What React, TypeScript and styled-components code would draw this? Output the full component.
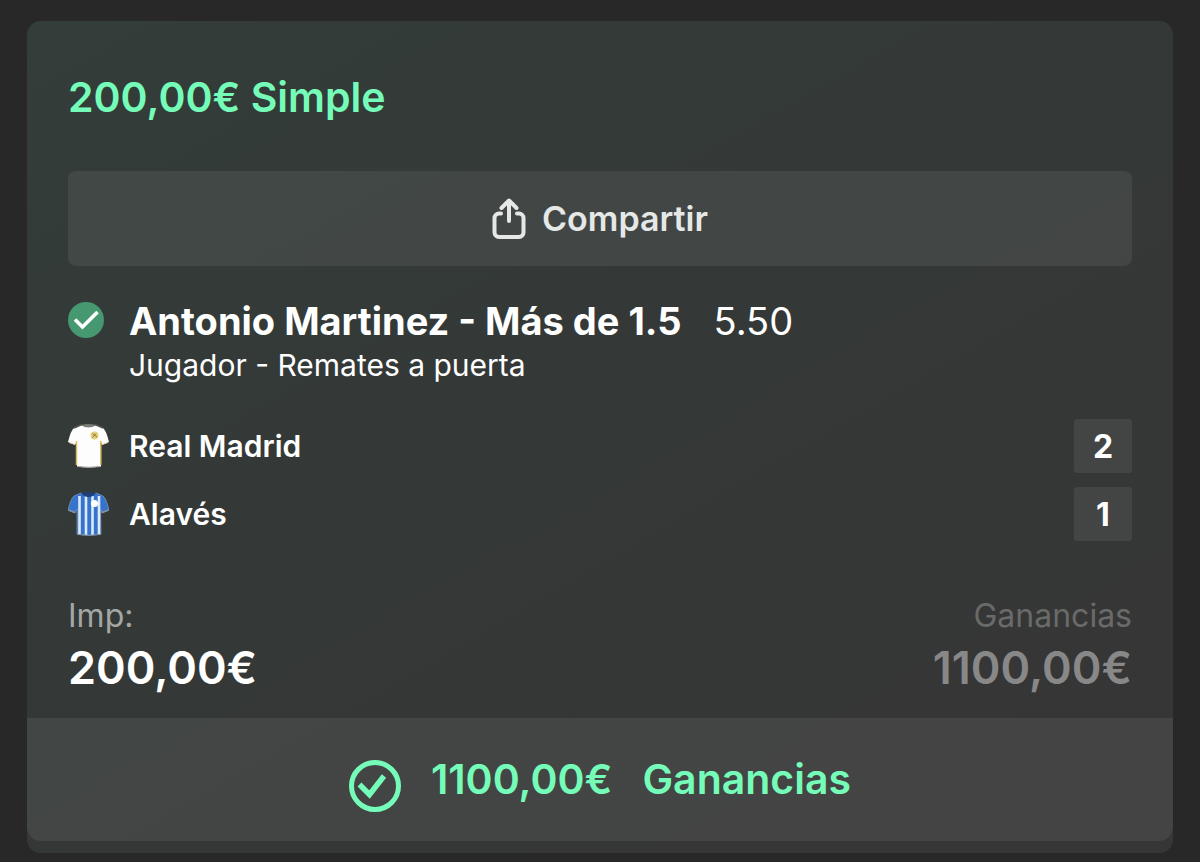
import React from "react";
import styled, { createGlobalStyle } from "styled-components";

const GlobalStyle = createGlobalStyle`
  *, *::before, *::after { box-sizing: border-box; }
  body {
    margin: 0;
    background: #282828;
    color: #fff;
    font-family: Inter, "Liberation Sans", sans-serif;
  }
  h1, h2, p, dl, dt, dd, ul { margin: 0; padding: 0; }
`;

const Page = styled.main`
  padding: 21px 27px 9px;
`;

const Card = styled.article`
  padding-bottom: 12px;
  border-radius: 14px;
  overflow: hidden;
  background: linear-gradient(150deg, #333d39 0%, #343837 50%, #363636 85%, #363636 100%);
`;

const CardBody = styled.div`
  display: flex;
  flex-direction: column;
  padding: 52px 41px 22px;
`;

const Title = styled.h1`
  font-size: 41px;
  line-height: 48px;
  font-weight: 600;
  color: #75fcb9;
`;

const ShareButton = styled.button`
  display: flex;
  align-items: center;
  justify-content: center;
  gap: 16px;
  height: 95px;
  margin-top: 50px;
  border: 0;
  border-radius: 8px;
  background: rgba(255, 255, 255, 0.07);
  color: #e6e8e7;
  font-family: inherit;
  font-size: 34px;
  line-height: 40px;
  font-weight: 600;
  cursor: pointer;
`;

const Selection = styled.section`
  display: grid;
  grid-template-columns: 36px 1fr;
  column-gap: 25px;
  margin-top: 31px;
`;

const StatusIcon = styled.svg`
  margin-top: 5px;
`;

const SelectionLine = styled.div`
  display: flex;
  gap: 32px;
  font-size: 38px;
  line-height: 48px;
`;

const SelectionName = styled.h2`
  font-size: inherit;
  font-weight: 700;
`;

const Odds = styled.span`
  font-weight: 400;
`;

const Market = styled.p`
  font-size: 30px;
  line-height: 40px;
`;

const Teams = styled.ul`
  display: flex;
  flex-direction: column;
  gap: 14px;
  margin-top: 34px;
  list-style: none;
`;

const TeamRow = styled.li`
  display: flex;
  align-items: center;
  height: 54px;
`;

const TeamName = styled.span`
  flex: 1;
  margin-left: 20px;
  font-size: 30px;
  font-weight: 600;
`;

const Score = styled.span`
  display: flex;
  align-items: center;
  justify-content: center;
  width: 58px;
  height: 100%;
  border-radius: 3px;
  background: rgba(255, 255, 255, 0.07);
  font-size: 32px;
  font-weight: 700;
`;

const Totals = styled.dl`
  display: flex;
  justify-content: space-between;
  margin-top: 55px;
`;

const Total = styled.div<{ $muted?: boolean }>`
  text-align: ${(p) => (p.$muted ? "right" : "left")};
  dt {
    font-size: 32px;
    line-height: 40px;
    font-weight: 400;
    color: ${(p) => (p.$muted ? "#696a69" : "#a4a7a6")};
  }
  dd {
    margin-top: 4px;
    font-size: 45px;
    line-height: 56px;
    font-weight: 600;
    color: ${(p) => (p.$muted ? "#888" : "#fff")};
  }
`;

const Result = styled.footer`
  display: flex;
  align-items: flex-start;
  justify-content: center;
  gap: 30px;
  padding: 42px 41px 29px;
  border-radius: 0 0 14px 14px;
  background: rgba(255, 255, 255, 0.07);
  color: #75fcb9;
  font-size: 41px;
  line-height: 38px;
  font-weight: 600;
`;

const ShareIcon = () => (
  <svg width="34" height="42" viewBox="0 0 34 42" fill="none" stroke="currentColor" strokeWidth="4" strokeLinecap="round" strokeLinejoin="round" aria-hidden="true">
    <path d="M9 15.500H7A4.500 4.500 0 0 0 2.500 20v14.500A4.500 4.500 0 0 0 7 39h20a4.500 4.500 0 0 0 4.500-4.500V20a4.500 4.500 0 0 0-4.500-4.500h-2" />
    <path d="M17 23V3M9.500 10L17 2.500L24.500 10" />
  </svg>
);

const WhiteShirt = () => (
  <svg width="41" height="46" viewBox="0 0 41 46" aria-hidden="true">
    <path d="M13 2Q20.500 6 28 2L35 5Q38 7 41 19L34 22L32.500 18L33 43Q20.500 46 9 43L9 18L7 22L0 19Q3 7 6 5Z" fill="#fdfdfd" />
    <path d="M13 2Q20.500 0 28 2Q20.500 7 13 2Z" fill="#777b79" />
    <path d="M14 1.500L6 5M27 1.500L35 5" stroke="#55564e" strokeWidth="1.500" />
    <path d="M8.500 18V42M32.800 18V42" stroke="#d6bd63" strokeWidth="1.500" />
    <path d="M1 19.500L7 21.500M34 21.500L40 19.500" stroke="#dfcf9d" />
    <path d="M9 43.500Q20.500 45 33 43.500" stroke="#aaa" fill="none" />
    <circle cx="26.500" cy="12.500" r="4" fill="#e5d17c" />
    <path d="M24.500 14.500L28 10.500M24.500 10.500L29 14" stroke="#8c7838" />
  </svg>
);

const StripedShirt = () => (
  <svg width="41" height="46" viewBox="0 0 41 46" aria-hidden="true">
    <path d="M13 2Q20.500 6 28 2L35 5Q38 7 41 19L34 22L32.500 18L33 43Q20.500 46 9 43L9 18L7 22L0 19Q3 7 6 5Z" fill="#3673ca" stroke="#7694b5" strokeWidth="0.800" />
    <path d="M11.500 5V43M18 5V44M24.500 5V44M31 5V43" stroke="#dce9fa" strokeWidth="2.600" />
    <path d="M13 2Q20.500 0 28 2L25 5Q20.500 7 16 5Z" fill="#203f78" />
    <path d="M0.500 19L7 21.500M34 21.500L40.500 19" stroke="#8292a5" strokeWidth="1.500" />
    <path d="M9 43.500Q20.500 45 33 43.500" stroke="#7f91a8" fill="none" />
    <circle cx="26.500" cy="12.500" r="3.600" fill="#fff" />
  </svg>
);

const teams = [
  { name: "Real Madrid", score: 2, Shirt: WhiteShirt },
  { name: "Alavés", score: 1, Shirt: StripedShirt },
];

export default function App() {
  return (
    <>
      <GlobalStyle />
      <Page>
        <Card>
          <CardBody>
            <Title>200,00€ Simple</Title>
            <ShareButton type="button">
              <ShareIcon />
              Compartir
            </ShareButton>
            <Selection>
              <StatusIcon width="36" height="36" viewBox="0 0 36 36" aria-hidden="true">
                <circle cx="18" cy="18" r="18" fill="#45986f" />
                <path d="M7 17.500L14.500 25L29.500 10" fill="none" stroke="#fff" strokeWidth="3.600" />
              </StatusIcon>
              <div>
                <SelectionLine>
                  <SelectionName>Antonio Martinez - Más de 1.5</SelectionName>
                  <Odds>5.50</Odds>
                </SelectionLine>
                <Market>Jugador - Remates a puerta</Market>
              </div>
            </Selection>
            <Teams>
              {teams.map(({ name, score, Shirt }) => (
                <TeamRow key={name}>
                  <Shirt />
                  <TeamName>{name}</TeamName>
                  <Score>{score}</Score>
                </TeamRow>
              ))}
            </Teams>
            <Totals>
              <Total>
                <dt>Imp:</dt>
                <dd>200,00€</dd>
              </Total>
              <Total $muted>
                <dt>Ganancias</dt>
                <dd>1100,00€</dd>
              </Total>
            </Totals>
          </CardBody>
          <Result>
            <svg width="52" height="52" viewBox="0 0 52 52" fill="none" stroke="currentColor" aria-hidden="true">
              <circle cx="26" cy="26" r="23.500" strokeWidth="5" />
              <path d="M10.500 24.500L20.500 34.500L35 16" strokeWidth="5.500" />
            </svg>
            <span>1100,00€</span>
            <span>Ganancias</span>
          </Result>
        </Card>
      </Page>
    </>
  );
}
